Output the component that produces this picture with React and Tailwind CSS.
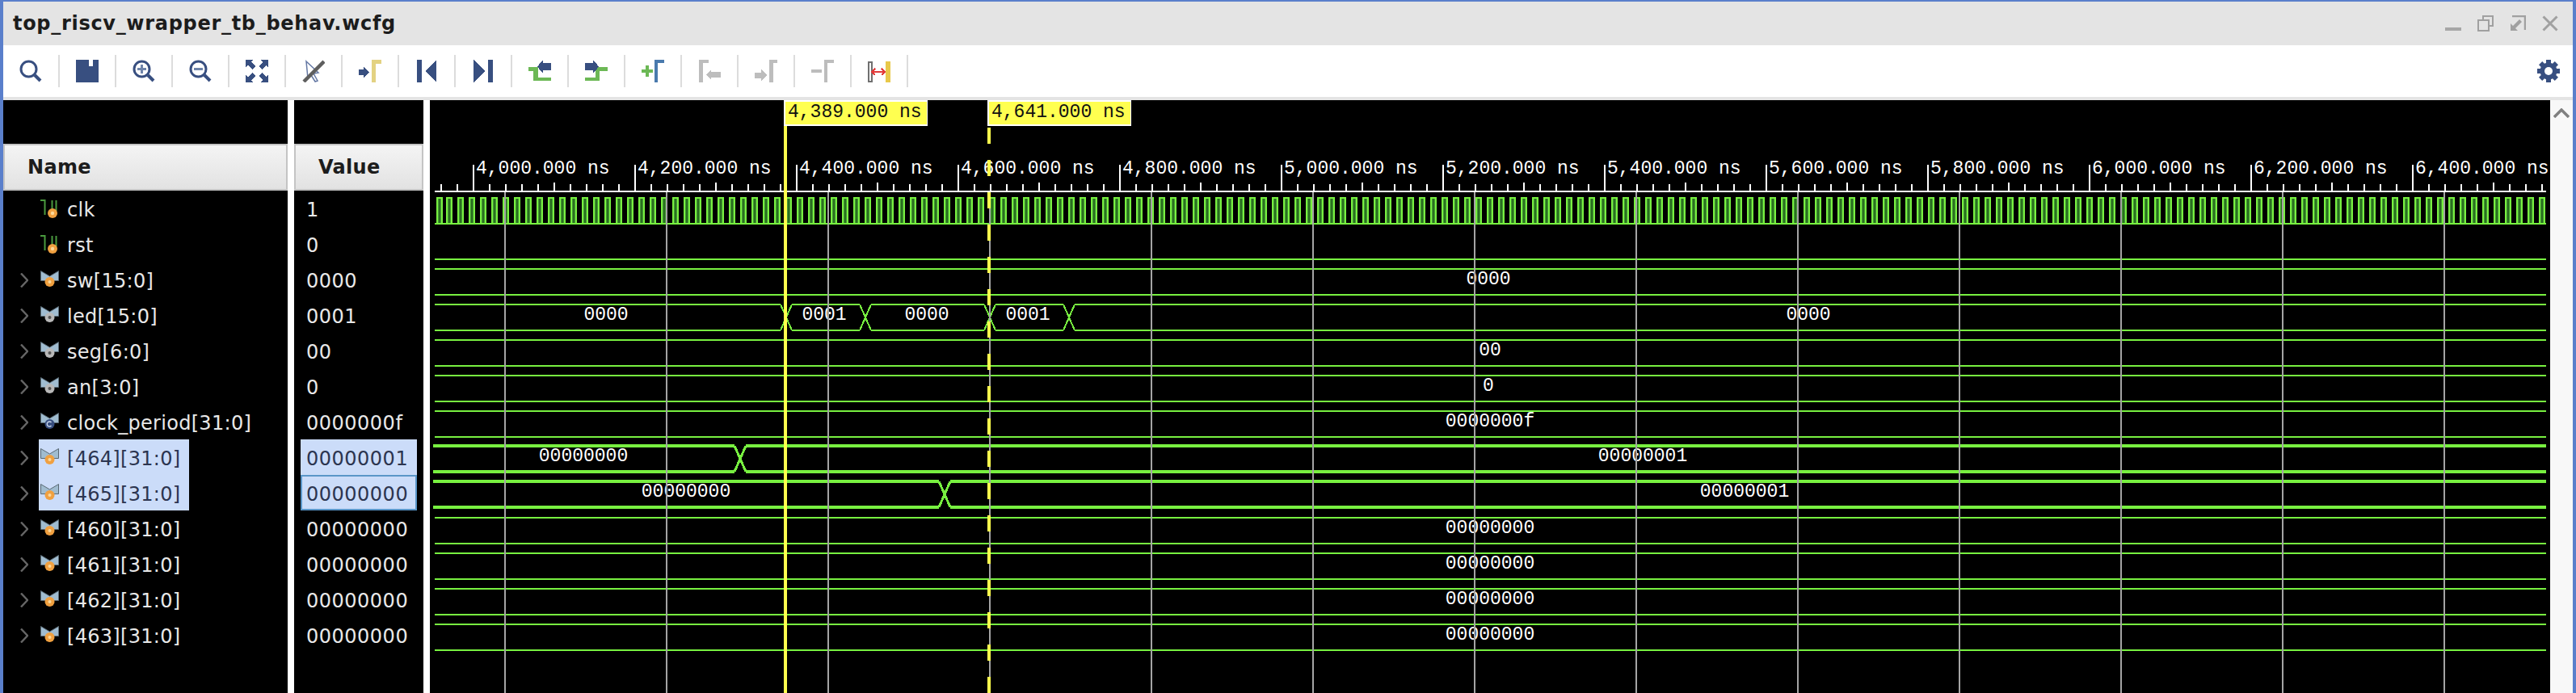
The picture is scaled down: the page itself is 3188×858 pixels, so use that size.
import React from "react";

const NAVY = "#384f80";
const GRAY = "#bdbdbd";
const GREEN = "#78f040";

function Mag({ kind }) {
  return (
    <svg width="28" height="28" viewBox="0 0 28 28" fill="none">
      <circle cx="11.5" cy="11.5" r="9.5" stroke={NAVY} strokeWidth="3" />
      <path d="M19 19L26 26" stroke={NAVY} strokeWidth="4" />
      {kind === "plus" && <path d="M11.5 6V17M6 11.5H17" stroke="#6f84aa" strokeWidth="3" />}
      {kind === "minus" && <path d="M6 11.5H17" stroke="#6f84aa" strokeWidth="3" />}
    </svg>
  );
}

function Ic({ children }) {
  return <svg width="28" height="28" viewBox="0 0 28 28" fill="none" shapeRendering="crispEdges">{children}</svg>;
}

const tools = [
  <Mag />,
  <Ic><path d="M0 0H16V8H21V0H28V28H0Z" fill={NAVY} /></Ic>,
  <Mag kind="plus" />,
  <Mag kind="minus" />,
  <Ic>
    <g fill={NAVY}>
      <path d="M0 0H9L7 3L12 8L8 12L3 7L0 9Z" />
      <path d="M28 0H19L21 3L16 8L20 12L25 7L28 9Z" />
      <path d="M0 28H9L7 25L12 20L8 16L3 21L0 19Z" />
      <path d="M28 28H19L21 25L16 20L20 16L25 21L28 19Z" />
    </g>
  </Ic>,
  <svg width="28" height="28" viewBox="0 0 28 28" fill="none">
    <path d="M5 2L20 16L14 17L19 26L16 27L11 19L7 23Z" stroke="#6478a4" strokeWidth="1.5" />
    <path d="M2 27L27 2" stroke="#5e5e5e" strokeWidth="4.5" />
  </svg>,
  <Ic>
    <rect x="16" y="0" width="5" height="28" fill="#e3d282" />
    <rect x="16" y="0" width="12" height="5" fill="#e3d282" />
    <path d="M0 12H6V8L13 15.5L6 23V19H0Z" fill={NAVY} />
  </Ic>,
  <Ic>
    <rect x="2" y="0" width="6" height="28" fill={NAVY} />
    <path d="M26 0V28L12 14Z" fill={NAVY} />
  </Ic>,
  <Ic>
    <rect x="20" y="0" width="6" height="28" fill={NAVY} />
    <path d="M2 0V28L16 14Z" fill={NAVY} />
  </Ic>,
  <Ic>
    <path d="M0 9H12V22H28V26H6V14H0Z" fill="#6cb855" />
    <path d="M28 4H18V0L11 8.5L18 17V13H28Z" fill={NAVY} />
  </Ic>,
  <Ic>
    <path d="M28 9V14H18V26H0V22H13V9Z" fill="#6cb855" />
    <path d="M0 4H10V0L17 8.5L10 17V13H0Z" fill={NAVY} />
  </Ic>,
  <Ic>
    <path d="M5 7H9V12H14V16H9V21H5V16H0V12H5Z" fill="#6cb855" />
    <path d="M16 0H28V4H20V28H16Z" fill="#4a7aad" />
  </Ic>,
  <Ic>
    <path d="M1 0H13V4H6V28H1Z" fill={GRAY} />
    <path d="M10 18L16 12V15H28V22H16V25Z" fill={GRAY} />
  </Ic>,
  <Ic>
    <path d="M18 0H28V4H23V28H18Z" fill={GRAY} />
    <path d="M0 16H8V12L15 19L8 26V23H0Z" fill={GRAY} />
  </Ic>,
  <Ic>
    <path d="M16 0H28V4H20V28H16Z" fill={GRAY} />
    <rect x="0" y="12" width="13" height="4" fill={GRAY} />
  </Ic>,
  <Ic>
    <rect x="1" y="3" width="4" height="24" stroke="#707070" strokeWidth="2" />
    <rect x="22" y="2" width="6" height="26" fill="#e8c84a" />
    <path d="M5 15H21" stroke="#e23b3b" strokeWidth="2" />
    <path d="M9 11L5 15L9 19M17 11L21 15L17 19" stroke="#e23b3b" strokeWidth="2" />
  </Ic>,
];

function Chevron() {
  return (
    <svg width="10" height="18" viewBox="0 0 10 18" fill="none">
      <path d="M1 0.5L9 9L1 17.5" stroke="#666666" strokeWidth="2.4" />
    </svg>
  );
}

function Gear() {
  return (
    <svg width="28" height="28" viewBox="0 0 28 28">
      <g fill={NAVY}>
        <circle cx="14" cy="14" r="10.5" />
        {[0, 45, 90, 135, 180, 225, 270, 315].map((a) => (
          <rect key={a} x="11" y="0" width="6" height="6" transform={`rotate(${a} 14 14)`} />
        ))}
      </g>
      <circle cx="14" cy="14" r="5" fill="#fff" />
    </svg>
  );
}

function SigIcon({ type }) {
  if (type === "bit") {
    return (
      <svg width="24" height="24" viewBox="0 0 24 24" fill="none">
        <path d="M0 1H5.5V19M14.5 1V14M19.5 1V14" stroke="#4a9a3e" strokeWidth="2" />
        <circle cx="15" cy="17" r="6" fill="#f0a040" />
        <circle cx="15" cy="17" r="2.2" fill="#fbd89a" />
      </svg>
    );
  }
  const dot = { in: "#f0a040", out: "#b8b8b8", con: "#384f80" }[type];
  return (
    <svg width="24" height="24" viewBox="0 0 24 24" fill="none">
      <path d="M0.5 0.5L11.5 7L22.5 0.5V12.5H0.5Z" fill="#a0bcd0" stroke="#5a6a74" strokeWidth="1" />
      <circle cx="11.5" cy="14" r="6" fill={dot} />
      {type === "con" ? (
        <path d="M13.5 12A3 3 0 1 0 13.5 16" stroke="#c8d4e8" strokeWidth="1.4" />
      ) : (
        <circle cx="11.5" cy="14" r="2" fill={type === "in" ? "#fbd89a" : "#555555"} />
      )}
    </svg>
  );
}

const signals = [
  { n: "clk", v: "1", t: "bit" },
  { n: "rst", v: "0", t: "bit" },
  { n: "sw[15:0]", v: "0000", t: "in" },
  { n: "led[15:0]", v: "0001", t: "out" },
  { n: "seg[6:0]", v: "00", t: "out" },
  { n: "an[3:0]", v: "0", t: "out" },
  { n: "clock_period[31:0]", v: "0000000f", t: "con" },
  { n: "[464][31:0]", v: "00000001", t: "in", sel: true },
  { n: "[465][31:0]", v: "00000000", t: "in", sel: true, focus: true },
  { n: "[460][31:0]", v: "00000000", t: "in" },
  { n: "[461][31:0]", v: "00000000", t: "in" },
  { n: "[462][31:0]", v: "00000000", t: "in" },
  { n: "[463][31:0]", v: "00000000", t: "in" },
];

const X0 = 538;
const X1 = 3151;

const buses = [
  { top: 333, lab: [["0000", 1842]], tr: [] },
  { top: 377, lab: [["0000", 750], ["0001", 1020], ["0000", 1147], ["0001", 1272], ["0000", 2238]], tr: [973, 1071, 1225, 1323] },
  { top: 421, lab: [["00", 1844]], tr: [] },
  { top: 465, lab: [["0", 1842]], tr: [] },
  { top: 509, lab: [["0000000f", 1844]], tr: [] },
  { top: 552, thick: true, lab: [["00000000", 722], ["00000001", 2033]], tr: [916] },
  { top: 596, thick: true, lab: [["00000000", 849], ["00000001", 2159]], tr: [1169] },
  { top: 641, lab: [["00000000", 1844]], tr: [] },
  { top: 685, lab: [["00000000", 1844]], tr: [] },
  { top: 729, lab: [["00000000", 1844]], tr: [] },
  { top: 773, lab: [["00000000", 1844]], tr: [] },
];

const range = (n) => Array.from({ length: n }, (_, i) => i);
const fmt = (ns) => {
  const s = String(ns);
  return s[0] + "," + s.slice(1) + ".000 ns";
};

function Bus({ b }) {
  const h = b.thick ? 4 : 2;
  const starts = [b.thick ? X0 - 2 : X0, ...b.tr.map((c) => c + 7)];
  const ends = [...b.tr.map((c) => c - 7), X1];
  const bot = b.top + 32;
  return (
    <g>
      {starts.map((s, i) => (
        <g key={i} fill={GREEN}>
          <rect x={s} y={b.top - h / 2} width={ends[i] - s} height={h} />
          <rect x={s} y={bot - h / 2} width={ends[i] - s} height={h} />
        </g>
      ))}
      {b.tr.map((c) => (
        <path key={c} d={`M${c - 7} ${b.top}L${c + 7} ${bot}M${c - 7} ${bot}L${c + 7} ${b.top}`} stroke={GREEN} strokeWidth={b.thick ? 3 : 2} fill="none" />
      ))}
      {b.lab.map(([t, x], i) => (
        <text key={i} x={x} y={b.top + 19} textAnchor="middle" fill="#ffffff">{t}</text>
      ))}
    </g>
  );
}

function Wave() {
  const pulses = [540, 552, ...range(185).map((i) => 566 + 14 * i)];
  return (
    <svg width="2624" height="734" viewBox="532 124 2624 734" shapeRendering="crispEdges" className="block font-['Liberation_Mono',monospace] text-[23px]">
      <rect x={X0} y={236} width={X1 - X0} height={2} fill="#ffffff" />
      {range(131).map((i) => {
        const x = 545 + i * 20;
        if (x > X1 - 4) return null;
        const k = (x - 585) / 20;
        const y = k % 10 === 0 ? 204 : k % 5 === 0 ? 226 : 228;
        return <rect key={i} x={x} y={y} width={2} height={236 - y} fill="#ffffff" />;
      })}
      {range(13).map((i) => (
        <text key={i} x={589 + 200 * i} y={215} fill="#ffffff">{fmt(4000 + 200 * i)}</text>
      ))}

      <rect x={X0} y={276} width={X1 - X0} height={2} fill={GREEN} />
      {pulses.map((x) => (
        <g key={x}>
          <rect x={x + 2} y={246} width={4} height={30} fill="#449a34" />
          <rect x={x + 3} y={246} width={2} height={30} fill="#2a6e20" />
          <path d={`M${x} 244H${x + 8}V278H${x + 6}V246H${x + 2}V278H${x}Z`} fill={GREEN} />
        </g>
      ))}
      <rect x={X0} y={320} width={X1 - X0} height={2} fill={GREEN} />
      {buses.map((b) => (
        <Bus key={b.top} b={b} />
      ))}

      {range(13).map((i) => (
        <rect key={i} x={624 + 200 * i} y={238} width={2} height={620} fill="#a4a4a4" />
      ))}

      <rect x={970} y={156} width={4} height={702} fill="#ffff4d" />
      {range(18).map((i) => (
        <rect key={i} x={1222} y={158 + 40 * i} width={4} height={20} fill="#ffff4d" />
      ))}
      {[[970, "4,389.000 ns"], [1222, "4,641.000 ns"]].map(([x, t]) => (
        <g key={x}>
          <rect x={x} y={124} width={178} height={32} fill="#ffffff" />
          <rect x={x + 2} y={126} width={175} height={28} fill="#ffff50" />
          <text x={x + 5} y={145} fill="#111111">{t}</text>
        </g>
      ))}
    </svg>
  );
}

export default function App() {
  return (
    <div className="w-[3188px] h-[858px] overflow-hidden flex flex-col border-t-2 border-x-4 border-[#5a7fcb] bg-black font-['DejaVu_Sans',sans-serif]">
      <div className="h-[54px] shrink-0 bg-[#e4e4e4] flex items-center justify-between pl-3 pr-[18px]">
        <span className="text-[24px] font-bold text-[#1c1c1c] leading-none tracking-[0.7px]">top_riscv_wrapper_tb_behav.wcfg</span>
        <div className="flex gap-5 items-start">
          <svg width="20" height="20" viewBox="0 0 20 20"><rect x="0" y="15" width="20" height="4" fill="#a6a6a6" /></svg>
          <svg width="20" height="20" viewBox="0 0 20 20" fill="none" stroke="#a0a0a0" strokeWidth="2"><path d="M7 6V1H19V13H14" /><rect x="1" y="6" width="13" height="13" /></svg>
          <svg width="20" height="20" viewBox="0 0 20 20" fill="none"><path d="M3 1H19V18" stroke="#a0a0a0" strokeWidth="2.5" /><path d="M1 19V10L4 13L12 5L15 8L7 16L10 19Z" fill="#a0a0a0" /></svg>
          <svg width="20" height="20" viewBox="0 0 20 20" fill="none"><path d="M1.5 1.5L18.5 18.5M18.5 1.5L1.5 18.5" stroke="#a0a0a0" strokeWidth="3" /></svg>
        </div>
      </div>

      <div className="h-16 shrink-0 bg-white flex items-center justify-between pr-4">
        <div className="flex">
          {tools.map((t, i) => (
            <div key={i} className="w-[70px] h-10 flex items-center justify-center border-r-2 border-[#dcdcdc]">
              {t}
            </div>
          ))}
        </div>
        <Gear />
      </div>
      <div className="h-1 shrink-0 bg-[#e4e4e4]" />

      <div className="flex flex-1 min-h-0">
        <div className="w-[352px] shrink-0 pt-[54px]">
          <div className="h-[58px] flex items-center pl-[28px] bg-gradient-to-b from-[#f4f4f4] to-[#e2e2e2] border-2 border-[#c4c4c4] text-[24px] font-bold tracking-[0.3px] text-[#1c1c1c]">Name</div>
          {signals.map((s) => (
            <div key={s.n} className="h-11 flex items-center pl-[21px]">
              <span className="w-[23px] pt-[2px] flex items-center">{s.t !== "bit" && <Chevron />}</span>
              <div className={`h-11 w-[186px] flex items-center ${s.sel ? "bg-[#cbdcf9] text-[#2c3550]" : "text-[#e8e8e8]"}`}>
                <span className="w-[35px] pl-[2px] pt-[2px] flex shrink-0"><SigIcon type={s.t} /></span>
                <span className="text-[24px] pt-[3px] tracking-[0.3px] whitespace-nowrap">{s.n}</span>
              </div>
            </div>
          ))}
        </div>
        <div className="w-2 shrink-0 bg-white" />
        <div className="w-40 shrink-0 pt-[54px]">
          <div className="h-[58px] flex items-center pl-[28px] bg-gradient-to-b from-[#f4f4f4] to-[#e2e2e2] border-2 border-[#c4c4c4] text-[24px] font-bold tracking-[0.3px] text-[#1c1c1c]">Value</div>
          {signals.map((s) => (
            <div key={s.n} className={`h-11 ml-2 w-36 flex items-center text-[24px] pt-[3px] tracking-[0.5px] ${s.focus ? "pl-[5px] border-2 border-[#5a96c8]" : "pl-[7px]"} ${s.sel ? "bg-[#cbdcf9] text-[#2c3550]" : "text-[#e8e8e8]"}`}>
              {s.v}
            </div>
          ))}
        </div>
        <div className="w-2 shrink-0 bg-white" />
        <div className="flex-1 min-w-0 bg-black">
          <Wave />
        </div>
        <div className="w-7 shrink-0 bg-[#f8f8f8] pt-[10px] flex justify-center">
          <svg width="20" height="12" viewBox="0 0 20 12" fill="none"><path d="M1 11L10 2L19 11" stroke="#808080" strokeWidth="3.5" /></svg>
        </div>
      </div>
    </div>
  );
}
